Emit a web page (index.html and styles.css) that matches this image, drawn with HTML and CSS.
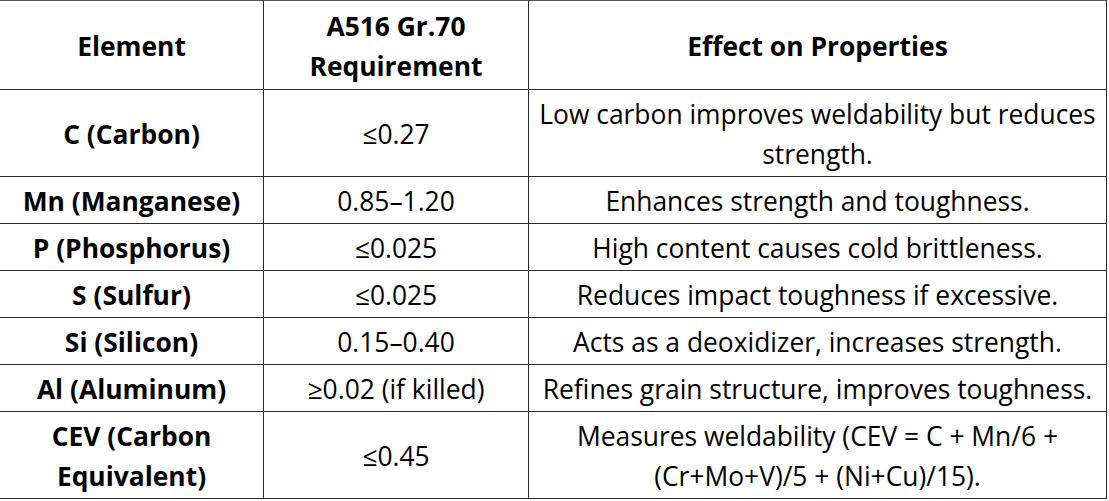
FILE: index.html
```html
<!DOCTYPE html>
<html>
<head>
<meta charset="utf-8">
<link rel="stylesheet" href="styles.css">
</head>
<body>
<table class="spec">
  <colgroup>
    <col class="c1"><col class="c2"><col class="c3">
  </colgroup>
  <thead>
    <tr class="head">
      <th>Element</th>
      <th>A516 Gr.70<br>Requirement</th>
      <th>Effect on Properties</th>
    </tr>
  </thead>
  <tbody>
    <tr class="tall"><th>C (Carbon)</th><td>≤0.27</td><td>Low carbon improves weldability but reduces strength.</td></tr>
    <tr><th>Mn (Manganese)</th><td>0.85–1.20</td><td>Enhances strength and toughness.</td></tr>
    <tr><th>P (Phosphorus)</th><td>≤0.025</td><td>High content causes cold brittleness.</td></tr>
    <tr><th>S (Sulfur)</th><td>≤0.025</td><td>Reduces impact toughness if excessive.</td></tr>
    <tr><th>Si (Silicon)</th><td>0.15–0.40</td><td>Acts as a deoxidizer, increases strength.</td></tr>
    <tr><th>Al (Aluminum)</th><td>≥0.02 (if killed)</td><td>Refines grain structure, improves toughness.</td></tr>
    <tr class="tall"><th>CEV (Carbon Equivalent)</th><td>≤0.45</td><td>Measures weldability (CEV = C + Mn/6 + (Cr+Mo+V)/5 + (Ni+Cu)/15).</td></tr>
  </tbody>
</table>
</body>
</html>
```
FILE: styles.css
```css
html, body {
  margin: 0;
  padding: 0;
  background: #fff;
}
body {
  font-family: "Open Sans", "Noto Sans", sans-serif;
  color: #000;
}
.spec {
  border-collapse: collapse;
  table-layout: fixed;
  width: 1107px;
  margin-left: -1px;
  font-size: 26.4px;
  line-height: 40px;
}
.c1 { width: 264px; }
.c2 { width: 265px; }
.c3 { width: 578px; }
.spec th, .spec td {
  border: 1px solid #2b2b2b;
  text-align: center;
  vertical-align: middle;
  padding: 4px 6px 2px;
}
.spec th { font-weight: 700; }
.spec td { font-weight: 400; }
.head th { height: 82px; }
.spec thead tr:first-child th { border-top: 1px solid #555; }
```
